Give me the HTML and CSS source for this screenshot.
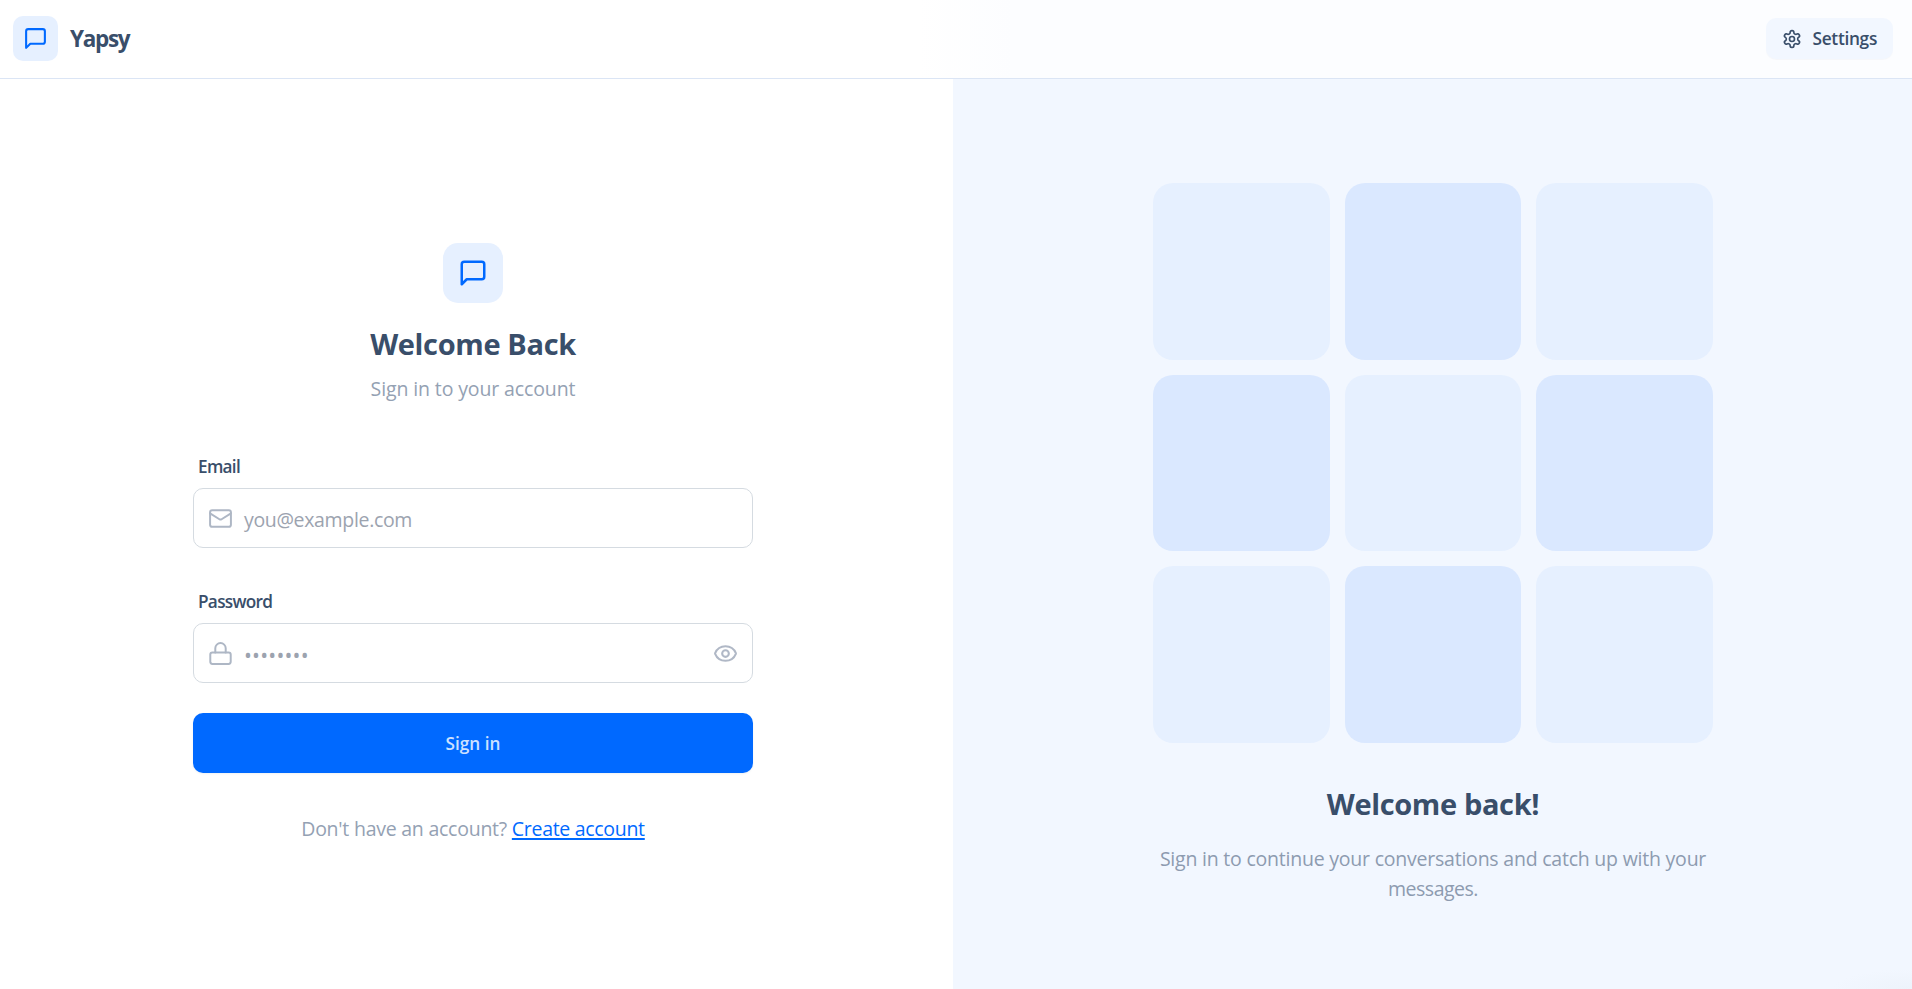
FILE: index.html
```
<!DOCTYPE html>
<html lang="en">
<head>
<meta charset="utf-8">
<title>Yapsy</title>
<link rel="stylesheet" href="styles.css">
</head>
<body>
<header class="navbar">
  <a class="brand">
    <span class="brand-icon"><svg class="icon" width="25" height="25" viewBox="0 0 24 24"><path d="M21 15a2 2 0 0 1-2 2H7l-4 4V5a2 2 0 0 1 2-2h14a2 2 0 0 1 2 2z"/></svg></span>
    <h1 class="brand-name">Yapsy</h1>
  </a>
  <a class="settings">
    <svg class="icon" width="20" height="20" viewBox="0 0 24 24"><path d="M12.22 2h-.44a2 2 0 0 0-2 2v.18a2 2 0 0 1-1 1.73l-.43.25a2 2 0 0 1-2 0l-.15-.08a2 2 0 0 0-2.73.73l-.22.38a2 2 0 0 0 .73 2.73l.15.1a2 2 0 0 1 1 1.72v.51a2 2 0 0 1-1 1.74l-.15.09a2 2 0 0 0-.73 2.73l.22.38a2 2 0 0 0 2.73.73l.15-.08a2 2 0 0 1 2 0l.43.25a2 2 0 0 1 1 1.73V20a2 2 0 0 0 2 2h.44a2 2 0 0 0 2-2v-.18a2 2 0 0 1 1-1.73l.43-.25a2 2 0 0 1 2 0l.15.08a2 2 0 0 0 2.73-.73l.22-.39a2 2 0 0 0-.73-2.73l-.15-.08a2 2 0 0 1-1-1.74v-.5a2 2 0 0 1 1-1.74l.15-.09a2 2 0 0 0 .73-2.73l-.22-.38a2 2 0 0 0-2.73-.73l-.15.08a2 2 0 0 1-2 0l-.43-.25a2 2 0 0 1-1-1.73V4a2 2 0 0 0-2-2z"/><circle cx="12" cy="12" r="3"/></svg>
    <span>Settings</span>
  </a>
</header>
<main class="layout">
  <section class="login">
    <div class="login-inner">
      <div class="intro">
        <span class="intro-icon"><svg class="icon" width="30" height="30" viewBox="0 0 24 24"><path d="M21 15a2 2 0 0 1-2 2H7l-4 4V5a2 2 0 0 1 2-2h14a2 2 0 0 1 2 2z"/></svg></span>
        <h2 class="title">Welcome Back</h2>
        <p class="subtitle">Sign in to your account</p>
      </div>
      <div class="form">
        <div class="group">
          <div class="label">Email</div>
          <div class="field">
            <svg class="icon field-icon" width="25" height="25" viewBox="0 0 24 24"><rect x="2" y="4" width="20" height="16" rx="2"/><path d="m22 7-8.97 5.7a1.94 1.94 0 0 1-2.06 0L2 7"/></svg>
            <span class="placeholder">you@example.com</span>
          </div>
        </div>
        <div class="group">
          <div class="label">Password</div>
          <div class="field">
            <svg class="icon field-icon" width="25" height="25" viewBox="0 0 24 24"><rect x="2.2" y="11" width="19.6" height="11" rx="2"/><path d="M7 11V7a5 5 0 0 1 10 0v4"/></svg>
            <span class="placeholder dots">••••••••</span>
            <svg class="icon eye" width="25" height="25" viewBox="0 0 24 24"><path d="M2.062 12.348a1 1 0 0 1 0-.696 10.75 10.75 0 0 1 19.876 0 1 1 0 0 1 0 .696 10.75 10.75 0 0 1-19.876 0"/><circle cx="12" cy="12" r="3.2"/></svg>
          </div>
        </div>
        <button class="submit"><span>Sign in</span></button>
      </div>
      <p class="signup">Don't have an account? <a class="link">Create account</a></p>
    </div>
  </section>
  <section class="pattern">
    <div class="pattern-inner">
      <div class="tiles">
        <div class="tile"></div><div class="tile strong"></div><div class="tile"></div>
        <div class="tile strong"></div><div class="tile"></div><div class="tile strong"></div>
        <div class="tile"></div><div class="tile strong"></div><div class="tile"></div>
      </div>
      <h2 class="title pattern-title">Welcome back!</h2>
      <p class="pattern-text">Sign in to continue your conversations and catch up with your<br><span class="last">messages.</span></p>
    </div>
  </section>
</main>
</body>
</html>
```
FILE: styles.css
```
* { box-sizing: border-box; margin: 0; padding: 0; }
body {
  height: 989px;
  display: flex;
  flex-direction: column;
  overflow: hidden;
  background: #fff;
  color: #394e6a;
  font: 19.5px/30px "Open Sans", "Noto Sans", sans-serif;
  letter-spacing: -.24px;
}
.icon { fill: none; stroke: currentColor; stroke-width: 2; stroke-linecap: round; stroke-linejoin: round; flex: none; display: block; }

.navbar {
  height: 79px;
  flex: none;
  display: flex;
  align-items: center;
  justify-content: space-between;
  padding: 0 19px 1px 13px;
  border-bottom: 1px solid #dbe5f5;
  background: linear-gradient(90deg, #fff 0, #fff 48%, #fcfdff 53%, #fcfdff 100%);
}
.brand { display: flex; align-items: center; gap: 12px; }
.brand-icon { width: 45px; height: 45px; border-radius: 10px; display: grid; place-items: center; background: #e6f0ff; color: #0069ff; }
.brand-name { font-size: 22.5px; line-height: 30px; font-weight: 700; letter-spacing: -1.3px; }
.settings {
  display: flex;
  align-items: center;
  gap: 10px;
  height: 41px;
  padding: 0 16px;
  border-radius: 10px;
  background: #f2f7ff;
  box-shadow: 0 1px 1px rgba(57, 78, 106, .03);
  font-size: 17.3px;
  font-weight: 600;
  letter-spacing: -.3px;
}

.layout { flex: 1; display: grid; grid-template-columns: 953px 1fr; }
.login { padding: 164px 7px 0 0; display: flex; justify-content: center; }
.login-inner { width: 560px; }
.intro { display: flex; flex-direction: column; align-items: center; }
.intro-icon { width: 60px; height: 60px; border-radius: 15px; display: grid; place-items: center; background: #e6f0ff; color: #0069ff; }
.title { margin-top: 21px; font-size: 29px; line-height: 40px; font-weight: 700; letter-spacing: -.35px; }
.subtitle { margin-top: 10px; line-height: 30px; color: #94a1b3; letter-spacing: -.12px; }

.form { margin-top: 48px; display: flex; flex-direction: column; }
.group { margin-bottom: 30px; }
.label { height: 36px; padding: 0 5px 6px; line-height: 30px; font-size: 17.2px; font-weight: 600; letter-spacing: -.7px; }
.group + .group .label { margin-top: 9px; }
.field { display: flex; align-items: center; height: 60px; padding: 0 14px; border: 1px solid #d5dbe1; border-radius: 10px; }
.field-icon { color: #aeb7c5; stroke-width: 1.9; }
.placeholder { margin-left: 11px; padding-top: 3px; color: #9ca3af; letter-spacing: -.33px; }
.dots { font-size: 21px; letter-spacing: .2px; }
.eye { margin-left: auto; color: #b0b8c6; }
.submit { height: 60px; padding-top: 2px; border: 0; border-radius: 10px; background: #0069ff; color: #cce1ff; font: 600 17.2px/30px "Open Sans", "Noto Sans", sans-serif; letter-spacing: 0; box-shadow: 0 1px 2px rgba(57, 78, 106, .08); }
.signup { margin-top: 41px; line-height: 30px; text-align: center; color: #94a1b3; }
.link { color: #0069ff; text-decoration: underline; text-decoration-thickness: 2px; text-underline-offset: 2px; letter-spacing: -.3px; }

.pattern { padding: 104px 0 0 1px; display: flex; justify-content: center; background: radial-gradient(ellipse 80px 20px at 100% 100%, #edf3fb, #f2f7ff); }
.pattern-inner { width: 560px; text-align: center; }
.tiles { display: grid; grid-template-columns: repeat(3, 1fr); gap: 15px; }
.tile { aspect-ratio: 1; border-radius: 20px; background: #e6f0ff; }
.strong { background: #dae8ff; }
.pattern-title { margin-top: 41px; }
.pattern-text { margin: 20px -5px 0; line-height: 30px; color: #8d9bb0; letter-spacing: -.22px; }
.last { letter-spacing: -.5px; }
```
